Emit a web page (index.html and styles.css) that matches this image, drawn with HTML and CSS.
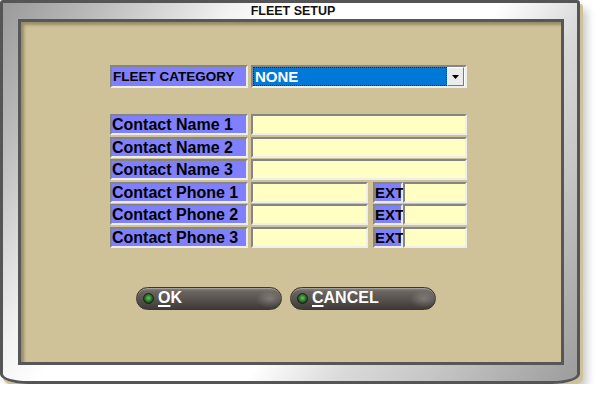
FILE: index.html
```html
<!DOCTYPE html>
<html>
<head>
	<meta charset="utf-8" />
	<title>Fleet Setup</title>
	<link rel="stylesheet" href="styles.css">
</head>
<body>
	<div class="window">
		<div class="titlebar">FLEET SETUP</div>
		<div class="panel">
			<div class="category">
				<div class="label small">FLEET CATEGORY</div>
				<div class="select">
					<span class="select-value">NONE</span>
					<span class="select-btn">
						<svg width="7" height="4" viewBox="0 0 7 4"><path d="M0 0h7L3.5 4z" fill="#000"/></svg>
					</span>
				</div>
			</div>

			<div class="contacts">
				<div class="row"><div class="label">Contact Name 1</div><div class="field wide"></div></div>
				<div class="row"><div class="label">Contact Name 2</div><div class="field wide"></div></div>
				<div class="row"><div class="label">Contact Name 3</div><div class="field wide"></div></div>
				<div class="row"><div class="label">Contact Phone 1</div><div class="field phone"></div><div class="label ext">EXT</div><div class="field extfield"></div></div>
				<div class="row"><div class="label">Contact Phone 2</div><div class="field phone"></div><div class="label ext">EXT</div><div class="field extfield"></div></div>
				<div class="row"><div class="label">Contact Phone 3</div><div class="field phone"></div><div class="label ext">EXT</div><div class="field extfield"></div></div>
			</div>

			<div class="buttons">
				<button class="btn"><span class="led"></span><u>O</u>K</button>
				<button class="btn"><span class="led"></span><u>C</u>ANCEL</button>
			</div>
		</div>
	</div>
</body>
</html>
```

FILE: styles.css
```css
* { margin:0; padding:0; box-sizing:border-box; }
body { background:#fff; font-family:"Liberation Sans", Arial, sans-serif; }

.window {
	width:580px; height:384px;
	border:3px solid #555;
	border-radius:3px 3px 28px 28px / 3px 3px 10px 10px;
	background:linear-gradient(124deg, #9a9a9a 0%, #bcbcbc 12%, #f2f2f2 28%, #fff 35%, #fff 60%, #dadada 71%, #c6c6c6 82%, #9c9c9c 100%);
	box-shadow:3px 4px 0 #cfc299, 7px 9px 9px rgba(0,0,0,.22);
	padding:0 13px 16px 15px;
	display:flex; flex-direction:column;
}

.titlebar {
	height:16px;
	text-align:center;
	font-size:12.5px; font-weight:bold; line-height:17px;
	color:#111;
	padding-left:4px;
}

.panel {
	flex:1;
	background:#cfc299;
	border:3px solid #575757;
	box-shadow:inset 3px 3px 3px rgba(50,40,20,.35);
	padding:43px 0 0 89px;
}

.category { display:flex; height:23px; }

.label {
	width:138px; margin-right:3px;
	background:#8080ff;
	border:2px solid; border-color:#858585 #eeeeee #eeeeee #858585;
	font-size:16px; font-weight:bold; color:#000;
	line-height:18px; white-space:nowrap;
	padding-left:0;
}
.label.small { font-size:13.5px; line-height:19px; padding-left:1px; }

.select {
	width:216px;
	border:2px solid; border-color:#858585 #eeeeee #eeeeee #858585;
	background:#fff;
	display:flex; padding:0 1px 0 0;
}
.select-value {
	flex:1;
	background:#0078d7;
	border:1px dotted #2a2a2a;
	color:#fff; font-size:15px; font-weight:bold; line-height:17px;
	padding-left:1px;
}
.select-btn {
	width:17px;
	background:#ececec;
	border:1px solid; border-color:#fff #7a7a7a #7a7a7a #fff;
	display:flex; align-items:center; justify-content:center;
}

.contacts {
	margin-top:26px;
	display:grid; grid-auto-rows:21px; row-gap:1.6px;
}
.row { display:flex; }

.field {
	background:#ffffc4;
	border:2px solid; border-color:#858585 #eeeeee #eeeeee #858585;
}
.field.wide { width:216px; }
.field.phone { width:117px; margin-right:5px; }
.label.ext { width:30px; margin-right:0; font-size:15px; padding-left:0; }
.field.extfield { width:64px; }

.buttons { display:flex; gap:8px; margin:39px 0 0 26px; }

.btn {
	width:146px; height:23px;
	border:1px solid #3b3733; border-radius:12px;
	background:
		radial-gradient(ellipse 14px 9px at 133px 11px, rgba(255,255,255,.22), rgba(255,255,255,0)),
		linear-gradient(#8a847e 0%, #6a645f 18%, #57524e 55%, #3e3a37 100%);
	box-shadow:inset 0 1px 0 rgba(255,255,255,.25);
	color:#fff; font-family:"Liberation Sans", Arial, sans-serif;
	font-size:16px; font-weight:bold;
	display:flex; align-items:center;
	padding-left:6px; text-align:left;
}
.btn u { text-decoration-thickness:2px; text-underline-offset:2px; }

.led {
	width:11px; height:11px; border-radius:50%;
	background:radial-gradient(circle at 50% 45%, #6fbf6a 0%, #2f7a2c 45%, #123a12 80%);
	border:1px solid #1d1d1a;
	margin-right:4px;
}
```
